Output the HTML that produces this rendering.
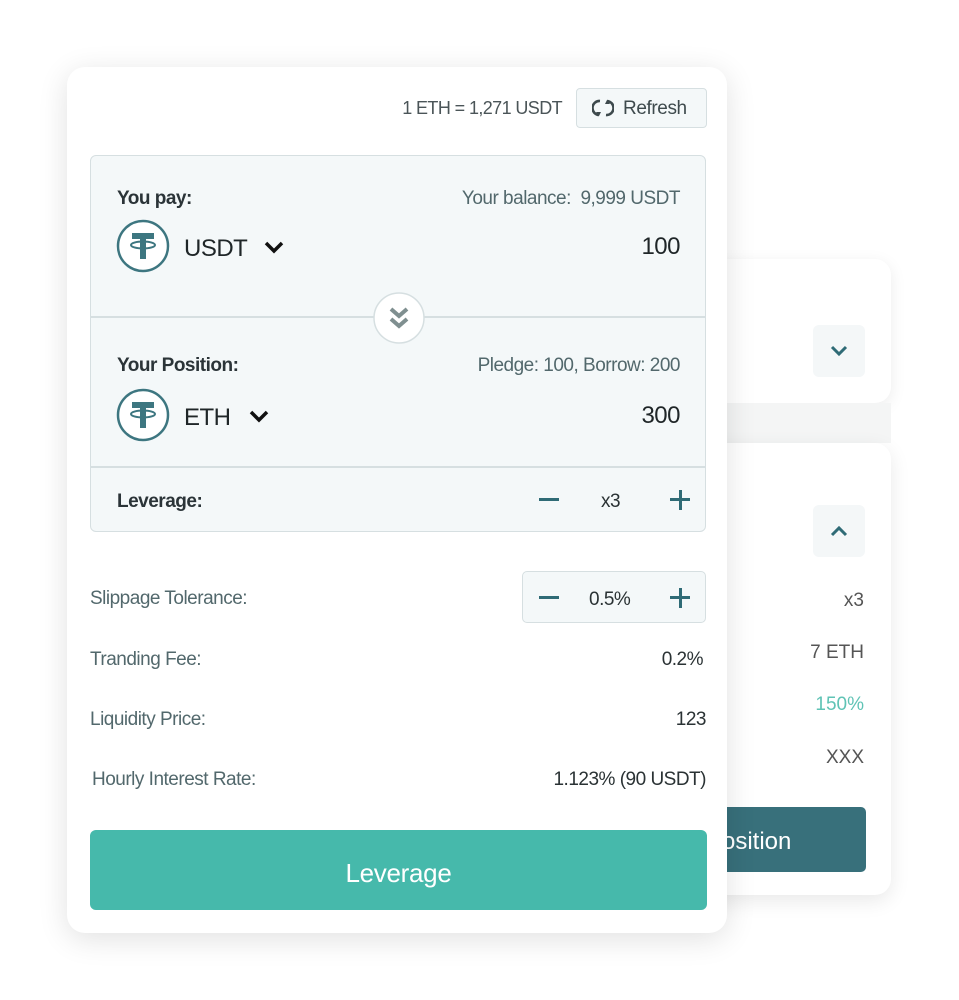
<!DOCTYPE html>
<html><head><meta charset="utf-8"><style>
*{margin:0;padding:0;box-sizing:border-box}
body{width:959px;height:1000px;background:#fff;position:relative;overflow:hidden;font-family:"Liberation Sans",sans-serif;}
.a{position:absolute;white-space:nowrap}
.r{text-align:right}
.back1{left:680px;top:259px;width:211px;height:144px;background:#fff;border-radius:16px;box-shadow:0 4px 16px rgba(0,0,0,.08)}
.gap{left:700px;top:403px;width:191px;height:40px;background:#f4f5f5}
.back2{left:680px;top:443px;width:211px;height:452px;background:#fff;border-radius:16px;box-shadow:0 6px 20px rgba(0,0,0,.09)}
.sq{width:52px;height:52px;background:#f4f7f8;border-radius:6px}
.card{left:67px;top:67px;width:660px;height:866px;background:#fff;border-radius:18px;box-shadow:0 6px 30px rgba(0,0,0,.12)}
.box{left:90px;top:155px;width:616px;height:377px;background:#f4f8f9;border:1.5px solid #d6dfe1;border-radius:6px}
.hl{height:1.5px;background:#d6dfe1;left:91px;width:614px}
.lab{font-size:19px;color:#2b3438;font-weight:bold;letter-spacing:-.5px}
.gr{font-size:19px;color:#52686c;letter-spacing:-.5px}
.big{font-size:24px;color:#1f2628;letter-spacing:-.5px}
.dk{font-size:19px;color:#2a3234;letter-spacing:-.5px}
</style></head><body>
<div class="a back1"></div>
<div class="a gap"></div>
<div class="a back2"></div>
<div class="a sq" style="left:813px;top:325px"></div>
<svg class="a" style="left:829px;top:344px" width="20" height="14"><path d="M3 3l7 7 7-7" stroke="#2f6b76" stroke-width="3" fill="none"/></svg>
<div class="a sq" style="left:813px;top:505px"></div>
<svg class="a" style="left:829px;top:524px" width="20" height="14"><path d="M3 11l7-7 7 7" stroke="#2f6b76" stroke-width="3" fill="none"/></svg>
<div class="a r" style="right:95px;top:590px;font-size:19px;color:#555">x3</div>
<div class="a r" style="right:95px;top:642px;font-size:19px;color:#555">7 ETH</div>
<div class="a r" style="right:95px;top:694px;font-size:19px;color:#5fc3b5">150%</div>
<div class="a r" style="right:95px;top:747px;font-size:19px;color:#555">XXX</div>
<div class="a" style="left:690px;top:807px;width:176px;height:65px;background:#38707b;border-radius:5px"></div>
<div class="a" style="left:722px;top:828px;font-size:24px;color:#fff">osition</div>

<div class="a card"></div>
<div class="a r" style="right:397px;top:98px;font-size:18px;color:#4b5558;letter-spacing:-.6px">1 ETH = 1,271 USDT</div>
<div class="a" style="left:576px;top:88px;width:131px;height:40px;background:#f4f8f9;border:1.5px solid #d6dfe1;border-radius:4px"></div>
<svg class="a" style="left:592px;top:97px" width="22" height="22" viewBox="0 0 22 22"><path d="M8 4A7 7 0 0 0 7 18M14 18A7 7 0 0 0 15 4" stroke="#3e4a4d" stroke-width="2.6" fill="none"/><path d="M4 15l3 4 2-4zM18 7l-3-4-2 4z" fill="#3e4a4d"/></svg>
<div class="a" style="left:623px;top:98px;font-size:19px;color:#3e4a4d;letter-spacing:-.4px">Refresh</div>

<div class="a box"></div>
<div class="a hl" style="top:316px"></div>
<div class="a hl" style="top:466px"></div>
<div class="a lab" style="left:117px;top:188px">You pay:</div>
<div class="a gr r" style="right:279px;top:188px">Your balance:&nbsp; 9,999 USDT</div>
<svg class="a" style="left:116px;top:219px" width="54" height="54" viewBox="0 0 54 54"><circle cx="27" cy="27" r="25" fill="#fff" stroke="#3d7680" stroke-width="2.5"/><rect x="16" y="14" width="22" height="6" fill="#3d7680"/><rect x="24" y="14" width="6" height="26" fill="#3d7680"/><ellipse cx="27" cy="26" rx="12" ry="3.5" fill="none" stroke="#3d7680" stroke-width="2"/></svg>
<div class="a big" style="left:184px;top:235px">USDT</div>
<svg class="a" style="left:263px;top:239px" width="22" height="16"><path d="M3 4l8 8 8-8" stroke="#111" stroke-width="3.5" fill="none"/></svg>
<div class="a big r" style="right:279px;top:233px">100</div>
<svg class="a" style="left:372px;top:291px" width="54" height="54"><circle cx="27" cy="27" r="25" fill="#fff" stroke="#d6dfe1" stroke-width="1.5"/><path d="M19 18l8 7 8-7M19 28l8 7 8-7" stroke="#7f8f90" stroke-width="4" fill="none"/></svg>
<div class="a lab" style="left:117px;top:355px">Your Position:</div>
<div class="a gr r" style="right:279px;top:355px">Pledge: 100, Borrow: 200</div>
<svg class="a" style="left:116px;top:388px" width="54" height="54" viewBox="0 0 54 54"><circle cx="27" cy="27" r="25" fill="#fff" stroke="#3d7680" stroke-width="2.5"/><rect x="16" y="14" width="22" height="6" fill="#3d7680"/><rect x="24" y="14" width="6" height="26" fill="#3d7680"/><ellipse cx="27" cy="26" rx="12" ry="3.5" fill="none" stroke="#3d7680" stroke-width="2"/></svg>
<div class="a big" style="left:184px;top:404px">ETH</div>
<svg class="a" style="left:248px;top:408px" width="22" height="16"><path d="M3 4l8 8 8-8" stroke="#111" stroke-width="3.5" fill="none"/></svg>
<div class="a big r" style="right:279px;top:402px">300</div>
<div class="a lab" style="left:117px;top:491px">Leverage:</div>
<div class="a" style="left:539px;top:498px;width:20px;height:3px;background:#2f6b76"></div>
<div class="a dk" style="left:601px;top:491px">x3</div>
<div class="a" style="left:670px;top:498px;width:20px;height:3px;background:#2f6b76"></div>
<div class="a" style="left:678.5px;top:490px;width:3px;height:20px;background:#2f6b76"></div>

<div class="a gr" style="left:90px;top:588px">Slippage Tolerance:</div>
<div class="a" style="left:522px;top:571px;width:184px;height:52px;background:#f4f8f9;border:1.5px solid #d6dfe1;border-radius:5px"></div>
<div class="a" style="left:539px;top:596px;width:20px;height:3px;background:#2f6b76"></div>
<div class="a dk" style="left:589px;top:589px">0.5%</div>
<div class="a" style="left:670px;top:596px;width:20px;height:3px;background:#2f6b76"></div>
<div class="a" style="left:678.5px;top:588px;width:3px;height:20px;background:#2f6b76"></div>
<div class="a gr" style="left:90px;top:649px">Tranding Fee:</div>
<div class="a dk r" style="right:256px;top:649px">0.2%</div>
<div class="a gr" style="left:90px;top:709px">Liquidity Price:</div>
<div class="a dk r" style="right:253px;top:709px">123</div>
<div class="a gr" style="left:92px;top:769px">Hourly Interest Rate:</div>
<div class="a dk r" style="right:253px;top:769px">1.123% (90 USDT)</div>
<div class="a" style="left:90px;top:830px;width:617px;height:80px;background:#46b9ab;border-radius:6px"></div>
<div class="a" style="left:90px;top:858px;width:617px;text-align:center;font-size:26px;color:#fff;letter-spacing:-.3px">Leverage</div>
</body></html>
